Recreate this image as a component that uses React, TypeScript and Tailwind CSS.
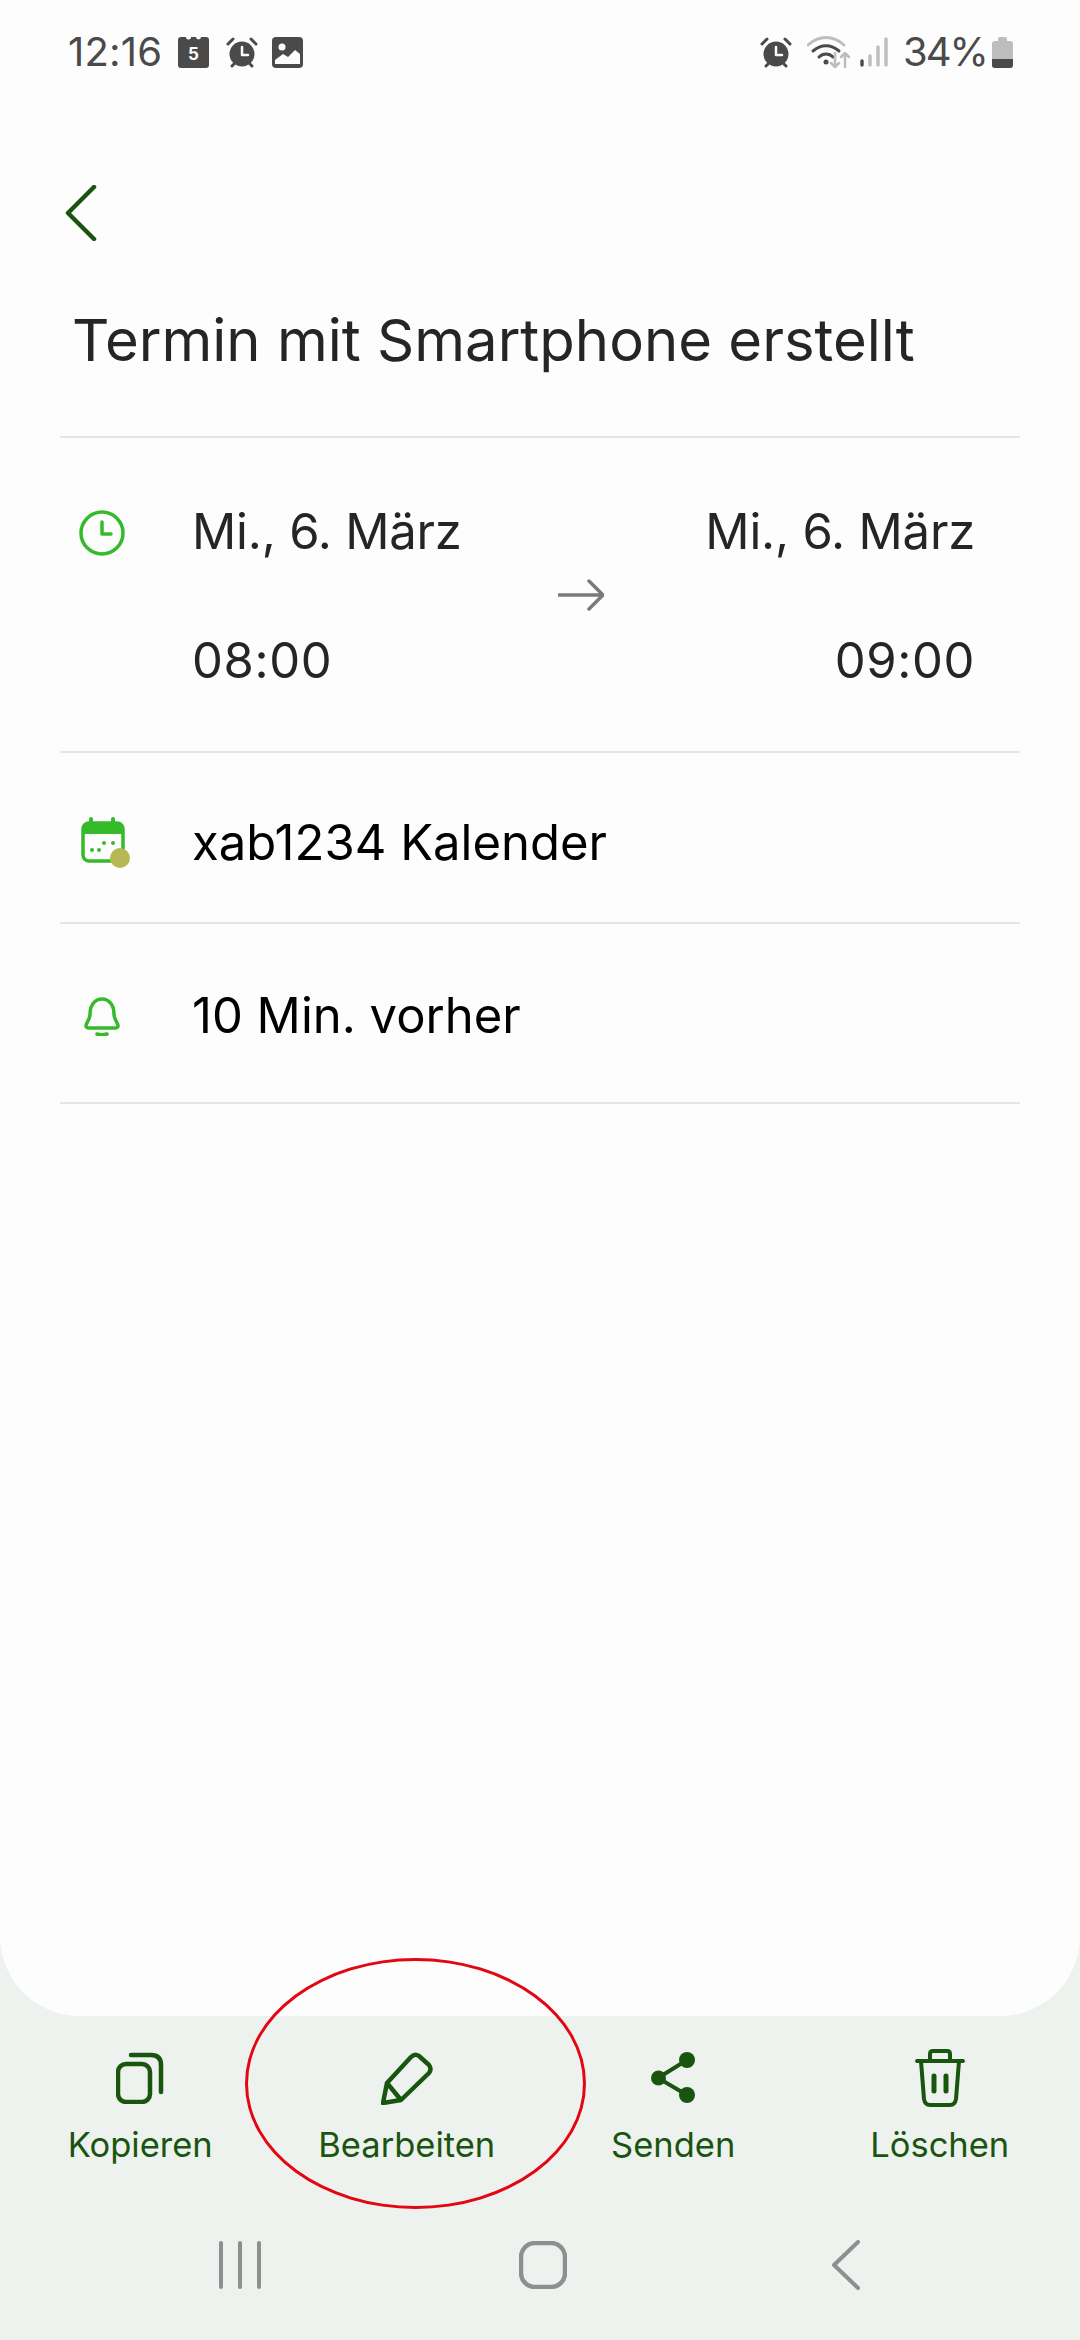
import React from 'react';

const green = '#1a5510';
const grey = '#4a4a4a';
const accent = '#35bb2a';

const AlarmIcon = ({ className }: { className?: string }) => (
    <svg width="32" height="31" viewBox="0 0 32 31" className={className}>
        <circle cx="16" cy="17" r="12.5" fill={grey} />
        <path d="M2 7l5-5M30 7l-5-5M6 29l2-2M26 29l-2-2" stroke={grey} strokeWidth="3" strokeLinecap="round" />
        <path d="M16 10v8h6" stroke="#fdfdfd" strokeWidth="2.5" fill="none" strokeLinecap="round" strokeLinejoin="round" />
    </svg>
);

const StatusIcons = () => (
    <div className="flex items-center">
        <span className="text-[40px] leading-none tracking-[0.2px] text-[#4a4a4a] w-[110px]">12:16</span>
        <svg width="31" height="31" viewBox="0 0 31 31" className="mr-[17px]">
            <path d="M3 0H8a2.5 2.5 0 0 0 5 0h5a2.5 2.5 0 0 0 5 0h5a3 3 0 0 1 3 3v25a3 3 0 0 1-3 3H3a3 3 0 0 1-3-3V3a3 3 0 0 1 3-3z" fill={grey} />
            <text x="15.5" y="23" textAnchor="middle" fontSize="17" fontWeight="700" fill="#fdfdfd" fontFamily="Inter, sans-serif">5</text>
        </svg>
        <AlarmIcon className="mr-[14px]" />
        <svg width="31" height="31" viewBox="0 0 31 31">
            <rect width="31" height="31" rx="4" fill={grey} />
            <circle cx="10" cy="10" r="3.5" fill="#fdfdfd" />
            <path d="M3 27v-4l8-6 5 3 7-7 5 4v10z" fill="#fdfdfd" />
        </svg>
    </div>
);

const StatusRight = () => (
    <div className="flex items-center">
        <AlarmIcon className="mr-[15px]" />
        <svg width="45" height="33" viewBox="0 0 45 33" className="mr-[8px]" fill="none">
            <path d="M1 9C12-1 26-1 37 9" stroke="#bdbdbd" strokeWidth="3" strokeLinecap="round" />
            <path d="M6 15c8-7 18-7 26 0" stroke={grey} strokeWidth="3" strokeLinecap="round" />
            <path d="M12 21c4-4 10-4 14 0" stroke={grey} strokeWidth="3" strokeLinecap="round" />
            <circle cx="19" cy="26" r="2.5" fill={grey} />
            <path d="M28 17v14M24 27l4 4 4-4" stroke="#bdbdbd" strokeWidth="2.5" strokeLinecap="round" strokeLinejoin="round" />
            <path d="M38 31V17M34 21l4-4 4 4" stroke="#bdbdbd" strokeWidth="2.5" strokeLinecap="round" strokeLinejoin="round" />
        </svg>
        <svg width="28" height="30" viewBox="0 0 28 30" className="mr-[15px]" strokeLinecap="round" strokeWidth="3.4">
            <path d="M2 24v4" stroke={grey} />
            <path d="M10 19v9M18 10v18M26 2v26" stroke="#bdbdbd" />
        </svg>
        <span className="text-[40px] leading-none tracking-[-2px] text-[#4a4a4a] w-[89px]">34%</span>
        <svg width="21" height="31" viewBox="0 0 21 31">
            <path d="M6 2a2 2 0 0 1 2-2h5a2 2 0 0 1 2 2v2h3a3 3 0 0 1 3 3v21a3 3 0 0 1-3 3H3a3 3 0 0 1-3-3V7a3 3 0 0 1 3-3h3z" fill="#bdbdbd" />
            <path d="M0 22h21v6a3 3 0 0 1-3 3H3a3 3 0 0 1-3-3z" fill={grey} />
        </svg>
    </div>
);

const actions = [
    {
        label: 'Kopieren',
        icon: (
            <svg width="48" height="52" viewBox="0 0 48 52" fill="none" stroke={green} strokeWidth="4.5" strokeLinecap="round">
                <rect x="2" y="12" width="32" height="38" rx="8" />
                <path d="M15 3h20q10 0 10 10v27" />
            </svg>
        ),
    },
    {
        label: 'Bearbeiten',
        icon: (
            <svg width="52" height="53" viewBox="0 0 52 53" fill="none" stroke={green} strokeWidth="4.5" strokeLinejoin="round">
                <path d="M6 31L30 5q4-4 8-1l10 9q3 4 0 8L20 48 2 51zM6 31l14 17" />
            </svg>
        ),
    },
    {
        label: 'Senden',
        icon: (
            <svg width="44" height="52" viewBox="0 0 44 52" fill={green}>
                <path d="M36 8L7 26l29 17" fill="none" stroke={green} strokeWidth="4" />
                <circle cx="36" cy="8" r="8" />
                <circle cx="7.500" cy="26" r="7.500" />
                <circle cx="36" cy="43" r="8" />
            </svg>
        ),
    },
    {
        label: 'Löschen',
        icon: (
            <svg width="50" height="58" viewBox="0 0 50 58" fill="none" stroke={green} strokeWidth="4" strokeLinecap="round" strokeLinejoin="round">
                <path d="M2 12h46M15 12V5q0-3 3-3h14q3 0 3 3v7" />
                <path d="M6 12l3 38q1 6 6 6h20q5 0 6-6l3-38" />
                <path d="M19 27v15M31 27v15" strokeWidth="5" />
            </svg>
        ),
    },
];

export default function App() {
    return (
        <div className="relative w-[1080px] h-[2340px] flex flex-col bg-[#eef2ee] overflow-hidden font-['Inter',sans-serif]">
            <div className="h-[2016px] shrink-0 bg-[#fdfdfd] rounded-b-[80px]">
                <div className="h-[104px] pl-[68px] pr-[67px] flex items-center justify-between">
                    <StatusIcons />
                    <StatusRight />
                </div>

                <div className="mt-[44px] h-[130px] pl-[65px] flex items-center">
                    <svg width="32" height="56" viewBox="0 0 32 56" fill="none" stroke={green} strokeWidth="4.5" strokeLinecap="round" strokeLinejoin="round">
                        <path d="M29 2L3 28l26 26" />
                    </svg>
                </div>

                <h1 className="h-[124px] pl-[72px] flex items-center text-[58px] font-normal text-[#252525]">
                    Termin mit Smartphone erstellt
                </h1>

                <div className="mt-[34px] mx-[60px] border-t-[2px] border-[#e6e6e6]">
                    <div className="h-[315px] border-b-[2px] border-[#e6e6e6] flex text-[49px] leading-none text-[#252525]">
                        <div className="w-[132px] pl-[19px] pt-[72px] shrink-0">
                            <svg width="46" height="46" viewBox="0 0 46 46" fill="none" stroke={accent} strokeWidth="3.5" strokeLinecap="round" strokeLinejoin="round">
                                <circle cx="23" cy="23" r="21" />
                                <path d="M23 12v12h9" />
                            </svg>
                        </div>
                        <div className="w-[240px] flex flex-col gap-[80px] pt-[69px]">
                            <span className="whitespace-nowrap tracking-[-0.2px]">Mi., 6. März</span>
                            <span className="tracking-[0.6px]">08:00</span>
                        </div>
                        <div className="flex-1 pt-[141px] pl-[126px]">
                            <svg width="46" height="32" viewBox="0 0 46 32" fill="none" stroke="#7a7a7a" strokeWidth="3.5" strokeLinecap="round" strokeLinejoin="round">
                                <path d="M1 16h44M31 2l14 14-14 14" />
                            </svg>
                        </div>
                        <div className="pr-[45px] flex flex-col items-end gap-[80px] pt-[69px]">
                            <span className="whitespace-nowrap tracking-[-0.2px]">Mi., 6. März</span>
                            <span className="tracking-[0.6px]">09:00</span>
                        </div>
                    </div>

                    <div className="h-[171px] pt-[10px] border-b-[2px] border-[#e6e6e6] flex items-center text-[49px] text-black">
                        <div className="w-[132px] pl-[21px] shrink-0">
                            <svg width="50" height="51" viewBox="0 0 50 51" className="block">
                                <path d="M10 2v6M32 2v6" stroke={accent} strokeWidth="4" strokeLinecap="round" />
                                <rect x="2" y="6" width="40" height="38" rx="6" fill="none" stroke={accent} strokeWidth="3.5" />
                                <path d="M2 12a6 6 0 0 1 6-6h28a6 6 0 0 1 6 6v5H2z" fill={accent} />
                                <circle cx="11" cy="33" r="2" fill={accent} />
                                <circle cx="18" cy="33" r="2" fill={accent} />
                                <circle cx="23" cy="26" r="2" fill={accent} />
                                <circle cx="32" cy="26" r="2" fill={accent} />
                                <circle cx="39" cy="41" r="10" fill="#b5b853" />
                            </svg>
                        </div>
                        <span>xab1234 Kalender</span>
                    </div>

                    <div className="h-[180px] pt-[6px] border-b-[2px] border-[#e6e6e6] flex items-center text-[49px] text-black">
                        <div className="w-[132px] pl-[24px] shrink-0">
                            <svg width="36" height="40" viewBox="0 0 36 40" fill="none" stroke={accent} strokeWidth="3.5" strokeLinecap="round" strokeLinejoin="round" className="block">
                                <path d="M6 18c0-9 5-15 12-15s12 6 12 15c0 6 4 8 4 12 0 1-1 2-2 2H4c-1 0-2-1-2-2 0-4 4-6 4-12z" />
                                <path d="M13 38c3 1 7 1 10 0" />
                            </svg>
                        </div>
                        <span>10 Min. vorher</span>
                    </div>
                </div>
            </div>

            <div className="px-[7px] pt-[32px] grid grid-cols-4">
                {actions.map(a => (
                    <div key={a.label} className="flex flex-col items-center">
                        <div className="h-[60px] flex items-center justify-center">{a.icon}</div>
                        <span className="mt-[15px] h-[44px] leading-[44px] text-[34.5px] text-[#1a5510] whitespace-nowrap">{a.label}</span>
                    </div>
                ))}
            </div>

            <div className="mt-[68px] ml-[88px] w-[909px] h-[60px] grid grid-cols-3 place-items-center">
                <svg width="44" height="48" viewBox="0 0 44 48" stroke="#8f8f8f" strokeWidth="4" strokeLinecap="round">
                    <path d="M3 2v44M22 2v44M41 2v44" />
                </svg>
                <svg width="48" height="48" viewBox="0 0 48 48" fill="none" stroke="#8f8f8f" strokeWidth="4.5">
                    <rect x="2" y="2" width="44" height="44" rx="14" />
                </svg>
                <svg width="28" height="50" viewBox="0 0 28 50" fill="none" stroke="#8f8f8f" strokeWidth="4" strokeLinecap="round" strokeLinejoin="round">
                    <path d="M26 2L2 25l24 23" />
                </svg>
            </div>

            {/* rote Markierung um Bearbeiten */}
            <div className="absolute left-[245px] top-[1958px] w-[341px] h-[251px] rounded-[50%] border-[3px] border-[#e30613]" />
        </div>
    );
}
